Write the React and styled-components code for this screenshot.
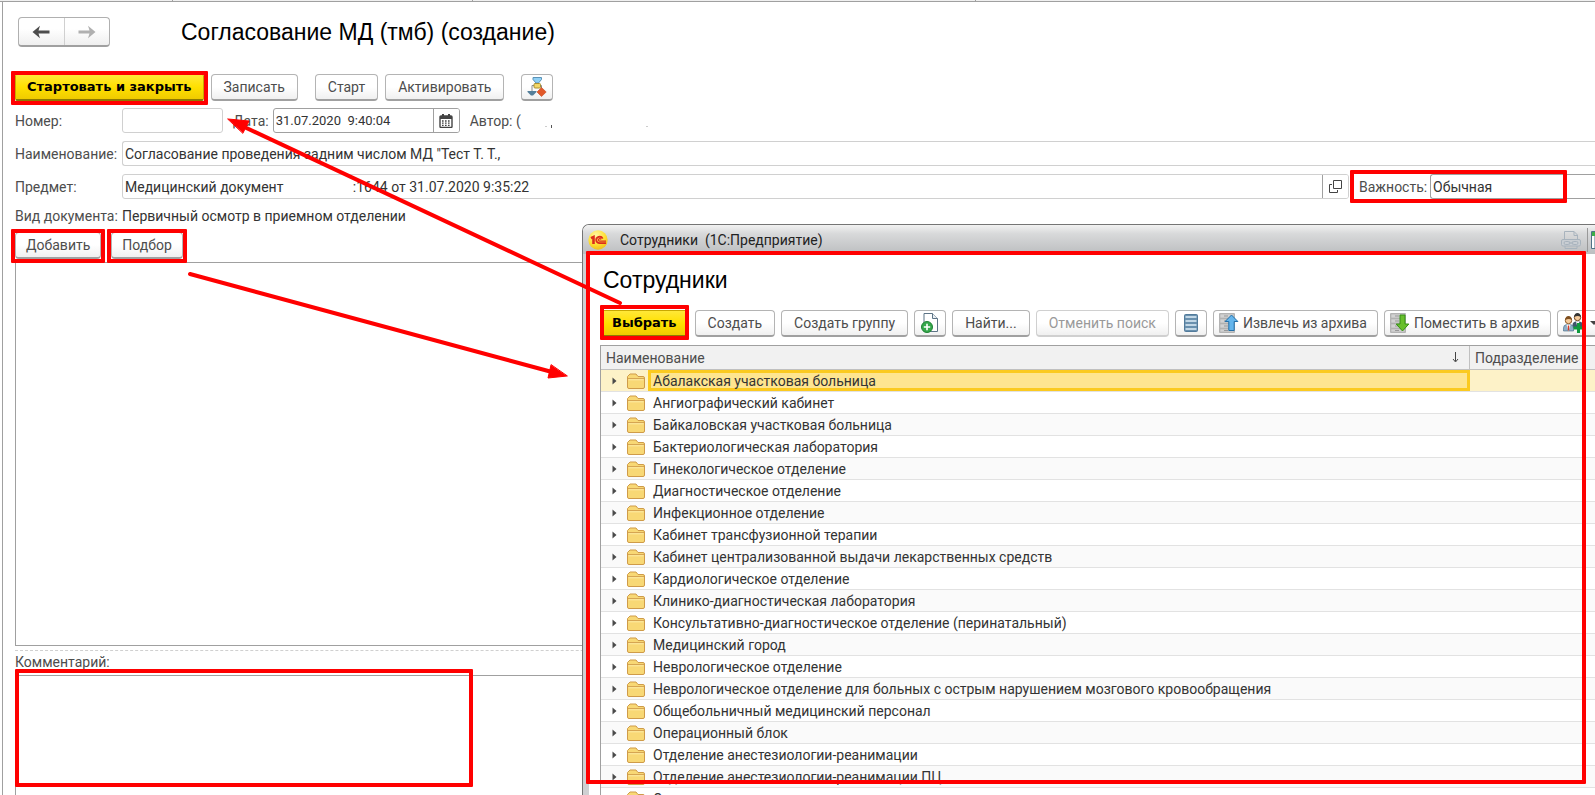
import React from "react";
import styled, { createGlobalStyle, css } from "styled-components";

const departments = [
  "Абалакская участковая больница",
  "Ангиографический кабинет",
  "Байкаловская участковая больница",
  "Бактериологическая лаборатория",
  "Гинекологическое отделение",
  "Диагностическое отделение",
  "Инфекционное отделение",
  "Кабинет трансфузионной терапии",
  "Кабинет централизованной выдачи лекарственных средств",
  "Кардиологическое отделение",
  "Клинико-диагностическая лаборатория",
  "Консультативно-диагностическое отделение (перинатальный)",
  "Медицинский город",
  "Неврологическое отделение",
  "Неврологическое отделение для больных с острым нарушением мозгового кровообращения",
  "Общебольничный медицинский персонал",
  "Операционный блок",
  "Отделение анестезиологии-реанимации",
  "Отделение анестезиологии-реанимации ПЦ",
  "О",
];

function BackIcon() {
  return (
    <svg width="18" height="14" viewBox="0 0 18 14">
      <path d="M0.5 7 8 0.8 6.5 5.4H17.5V8.6H6.5L8 13.2Z" fill="#4d4d4d" />
    </svg>
  );
}

function ForwardIcon() {
  return (
    <svg width="18" height="14" viewBox="0 0 18 14">
      <path d="M17.5 7 10 0.8 11.5 5.4H0.5V8.6H11.5L10 13.2Z" fill="#b0b0b0" />
    </svg>
  );
}

function RouteIcon() {
  return (
    <svg width="20" height="20" viewBox="0 0 20 20">
      <path d="M7 8.500H5V14M13.500 8.500h1V11" fill="none" stroke="#8b8b8b" />
      <path d="M6 0.500h8.500v2l-3 3.500h-2.500l-3-3.500z" fill="#8fd0f5" stroke="#5b93b8" />
      <rect x="7" y="6.500" width="6.500" height="4.500" rx="1" fill="#f3d767" stroke="#a88f35" />
      <path d="M0.500 14h9v1L6 18.500H4L0.500 15z" fill="#557f9a" />
      <path d="M14.500 10.500 19.200 15l-4.700 4.500L10 15z" fill="#e2592a" stroke="#c7481e" strokeWidth="0.600" />
    </svg>
  );
}

function CalendarIcon() {
  return (
    <svg width="14" height="14" viewBox="0 0 14 14">
      <rect x="1" y="2" width="12" height="11.500" rx="1" fill="#fff" stroke="#444" strokeWidth="1.400" />
      <path d="M1 2h12v3H1z" fill="#444" />
      <path d="M4 0v3M10 0v3" stroke="#444" strokeWidth="2" />
      <path d="M3 7h8M3 9.200h8M3 11.400h8" stroke="#444" strokeWidth="1.300" strokeDasharray="1.600 1.400" />
    </svg>
  );
}

function OpenIcon() {
  return (
    <svg width="13" height="13" viewBox="0 0 13 13" fill="none" stroke="#444">
      <path d="M4.500 0.500h8v8h-8z" />
      <path d="M3 4.500H0.500v8h8V10" />
    </svg>
  );
}

function LogoIcon() {
  return (
    <svg width="20" height="20" viewBox="0 0 20 20">
      <defs>
        <radialGradient id="logo" cx="0.4" cy="0.25" r="0.8">
          <stop offset="0" stopColor="#fff7a0" />
          <stop offset="0.6" stopColor="#ffdf33" />
          <stop offset="1" stopColor="#eebb1c" />
        </radialGradient>
      </defs>
      <circle cx="10" cy="10" r="9.700" fill="url(#logo)" />
      <g fill="none" stroke="#dc2c1c">
        <path d="M3 8.200 5.500 7V14" strokeWidth="2.600" />
        <path d="M14.700 8.600A3.400 3.200 0 1 0 11.600 13.200H18" strokeWidth="1.800" />
        <path d="M13 9.500A1.300 1.300 0 1 0 11.600 11.200H18" strokeWidth="1.300" />
      </g>
    </svg>
  );
}

function PrintIcon() {
  return (
    <svg width="20" height="18" viewBox="0 0 20 18" fill="none" stroke="#a8b3bd">
      <path d="M3.500 8.500v-8h9.500l3.500 3.500v4.500M13 0.500v4h3.500" />
      <rect x="0.500" y="8.500" width="19" height="6.500" rx="1.500" fill="#c9ced3" />
      <path d="M4 15v2.500h12V15" />
      <rect x="3" y="10.500" width="6" height="3" rx="1.500" />
      <rect x="11" y="10.500" width="6" height="3" rx="1.500" />
      <path d="M7.500 12h5" />
    </svg>
  );
}

function CopyIcon() {
  return (
    <svg width="18" height="20" viewBox="0 0 18 20">
      <path d="M3 0.500h8.500l5 5V18.500H3z" fill="#fff" stroke="#5d7486" />
      <path d="M11.500 0.500v5h5" fill="#e9eef2" stroke="#5d7486" />
      <circle cx="6" cy="14" r="5.500" fill="#35a84b" stroke="#1f8234" />
      <path d="M6 10.800v6.400M2.800 14h6.400" stroke="#fff" strokeWidth="1.600" />
    </svg>
  );
}

function ListIcon() {
  return (
    <svg width="14" height="18" viewBox="0 0 14 18">
      <rect x="0.500" y="0.500" width="13" height="17" rx="1" fill="#6990ae" stroke="#527b9b" />
      <path d="M1.500 3h11M1.500 7h11M1.500 11h11M1.500 15h11" stroke="#c2d7e6" strokeWidth="2" />
    </svg>
  );
}

function ArchiveIcon({ down }) {
  return (
    <svg width="20" height="20" viewBox="0 0 20 20">
      <rect width="16" height="20" rx="1" fill="#b5b5b5" />
      <path d="M1 1h14v4H1zM1 6h14v4H1zM1 11h14v4H1zM1 16h14v3H1z" fill="#d2d2d2" stroke="#b0b0b0" strokeWidth="0.600" />
      <path d="M5 3h4M5 8h4M5 13h4M5 17.500h4" stroke="#999" />
      {down ? (
        <path d="M10 2h5v9h3.800L12.500 18 6.200 11H10z" fill="#69bf2d" stroke="#379016" />
      ) : (
        <path d="M12.500 2 18.900 8.500H15.200V17.500H9.800V8.500H6.100z" fill="#64b5ec" stroke="#236fa8" />
      )}
    </svg>
  );
}

function PeopleIcon() {
  return (
    <svg width="21" height="20" viewBox="0 0 21 20">
      <path d="M9.500 15V12q0-3 3-3.500h4q3.500 0.500 3.500 4V15z" fill="#3f566c" />
      <path d="M13 8.500 14.500 14 16.500 8.500z" fill="#fff" />
      <circle cx="14.500" cy="4.500" r="3.200" fill="#f4ca9b" stroke="#6f4522" />
      <path d="M11 4q0.500-4 3.500-4t3.500 4q-3-2-7 0z" fill="#333" />
      <path d="M0.500 18v-3q0-3 3-3.500h4q3 0.500 3 3.500v3z" fill="#8fb0c9" stroke="#42657e" strokeWidth="0.600" />
      <path d="M3.500 11.500 5.500 18 7.500 11.500z" fill="#fff" />
      <path d="M5.500 12.500v5" stroke="#d43a26" strokeWidth="1.400" />
      <circle cx="5.500" cy="7.500" r="3.200" fill="#f6cd9c" stroke="#8a5523" />
      <path d="M2 7q0.500-4 3.500-4t3.500 4q-3-2-7 0z" fill="#80501f" />
      <path d="M15.500 10v10M10.500 15h10" stroke="#109a3e" strokeWidth="3" />
    </svg>
  );
}

function FolderIcon() {
  return (
    <svg width="18" height="16" viewBox="0 0 18 16">
      <path d="M0.500 14V3.500L3 1h6l2 2.500h5q1.500 0 1.500 1.500v9q0 1.500-1.500 1.500H2Q0.500 15.500 0.500 14z" fill="#f8d875" stroke="#cf9b49" />
      <path d="M1 5.500h16" stroke="#d6a552" />
      <path d="M1.500 6.800h15" stroke="#fdeba4" />
    </svg>
  );
}

function Expander() {
  return (
    <svg width="5" height="8" viewBox="0 0 5 8">
      <path d="M0.500 0.500 4.500 4 0.500 7.500z" fill="#4a4a4a" />
    </svg>
  );
}

function Arrows() {
  return (
    <ArrowLayer width="640" height="400" viewBox="0 0 640 400">
      <g stroke="#ff0000" strokeWidth="4" fill="#ff0000" strokeLinecap="round">
        <path d="M620 303 240 125" />
        <path d="M190 274 552 372" />
        <path d="M228 119 249 121 243 133z" strokeWidth="1" />
        <path d="M567 376 548 378 551 365z" strokeWidth="1" />
      </g>
    </ArrowLayer>
  );
}

function App() {
  return (
    <Page>
      <GlobalStyle />
      <TabStrip>
        <Tab />
        <Tab $wide />
        <Tab $wide />
      </TabStrip>
      <Form>
        <Header>
          <NavGroup>
            <NavButton aria-label="Назад">
              <BackIcon />
            </NavButton>
            <NavButton aria-label="Вперед">
              <ForwardIcon />
            </NavButton>
          </NavGroup>
          <Title>Согласование МД (тмб) (создание)</Title>
        </Header>

        <Toolbar>
          <Marked>
            <Button $primary>Стартовать и закрыть</Button>
          </Marked>
          <Button>Записать</Button>
          <Divider />
          <Button>Старт</Button>
          <Button>Активировать</Button>
          <Divider />
          <Button $icon aria-label="Карта маршрута">
            <RouteIcon />
          </Button>
        </Toolbar>

        <Field>
          <Label htmlFor="number">Номер:</Label>
          <Box $width={101}>
            <Input id="number" />
          </Box>
          <InlineLabel htmlFor="date">Дата:</InlineLabel>
          <Box $width={187} $dark>
            <Input id="date" $small defaultValue="31.07.2020  9:40:04" />
            <BoxButton aria-label="Календарь">
              <CalendarIcon />
            </BoxButton>
          </Box>
          <Author>
            <span>Автор: (</span>
            <svg width="130" height="14" viewBox="0 0 130 14">
              <path d="M20 12.500h2M121 12.500h2" stroke="#ccc" />
              <path d="M26.500 11v3" stroke="#555" />
            </svg>
          </Author>
        </Field>

        <Field>
          <Label htmlFor="name">Наименование:</Label>
          <Box $open>
            <Input
              id="name"
              defaultValue={'Согласование проведения задним числом МД "Тест Т. Т.,'}
            />
          </Box>
        </Field>

        <Field>
          <Label htmlFor="subject">Предмет:</Label>
          <Box>
            <Input
              id="subject"
              defaultValue={"Медицинский документ" + " ".repeat(20) + ":1644 от 31.07.2020 9:35:22"}
            />
            <BoxButton aria-label="Открыть">
              <OpenIcon />
            </BoxButton>
          </Box>
          <Importance>
            <label htmlFor="importance">Важность:</label>
            <Box $open $dark>
              <Input id="importance" defaultValue="Обычная" />
            </Box>
          </Importance>
        </Field>

        <Kind>
          <Label as="span">Вид документа:</Label>
          <span>Первичный осмотр в приемном отделении</span>
        </Kind>

        <ListToolbar>
          <Marked>
            <Button>Добавить</Button>
          </Marked>
          <Marked>
            <Button>Подбор</Button>
          </Marked>
        </ListToolbar>

        <List />
        <Splitter />
        <CommentLabel htmlFor="comment">Комментарий:</CommentLabel>
        <CommentArea>
          <Comment id="comment" />
        </CommentArea>
      </Form>

      <Window>
        <TitleBar>
          <LogoIcon />
          <span>Сотрудники&nbsp; (1С:Предприятие)</span>
          <TitleTools>
            <PrintIcon />
            <CalcEdge>
              <svg width="4" height="18" viewBox="0 0 4 18">
                <path d="M0.500 0.500H4V17.500H0.500z" fill="#fff" stroke="#4f7186" />
                <path d="M1 1h3v4H1z" fill="#3fae49" />
              </svg>
            </CalcEdge>
          </TitleTools>
        </TitleBar>
        <WindowBody>
          <WindowTitle>Сотрудники</WindowTitle>
          <WindowToolbar>
            <Marked>
              <Button $primary>Выбрать</Button>
            </Marked>
            <Button>Создать</Button>
            <Button>Создать группу</Button>
            <Button $icon aria-label="Скопировать">
              <CopyIcon />
            </Button>
            <Button>Найти...</Button>
            <Button disabled>Отменить поиск</Button>
            <Button $icon aria-label="Режим просмотра">
              <ListIcon />
            </Button>
            <Button $picture>
              <ArchiveIcon />
              Извлечь из архива
            </Button>
            <Button $picture>
              <ArchiveIcon down />
              Поместить в архив
            </Button>
            <Button $picture aria-label="Добавить сотрудников">
              <PeopleIcon />
              <Caret />
            </Button>
          </WindowToolbar>
          <Table>
            <thead>
              <tr>
                <Th $main>
                  <HeadCell>
                    Наименование
                    <svg width="7" height="11" viewBox="0 0 7 11">
                      <path d="M3.500 0v9M1 7l2.500 3L6 7" fill="none" stroke="#444" />
                    </svg>
                  </HeadCell>
                </Th>
                <Th>Подразделение</Th>
              </tr>
            </thead>
            <tbody>
              {departments.map((name, i) => (
                <Row key={name} $selected={i === 0}>
                  <td>
                    <NameCell>
                      <Expander />
                      <FolderIcon />
                      <Name $selected={i === 0}>{name}</Name>
                    </NameCell>
                  </td>
                  <td />
                </Row>
              ))}
            </tbody>
          </Table>
        </WindowBody>
        <WindowFrame />
      </Window>
      <Arrows />
    </Page>
  );
}

const GlobalStyle = createGlobalStyle`
  *, *::after {
    box-sizing: border-box;
  }
  body {
    margin: 0;
    background: #fff;
    color: #333;
    font: 14px/20px Roboto, "Liberation Sans", sans-serif;
  }
  button, input, textarea {
    font: inherit;
    color: inherit;
  }
  svg {
    display: block;
    flex: none;
  }
`;

const Page = styled.div`
  position: relative;
  display: flex;
  flex-direction: column;
  height: 100vh;
  overflow: hidden;
`;

const TabStrip = styled.div`
  display: flex;
  flex: none;
  height: 2px;
  padding-left: 172px;
  background: #f0f0f0;
  border-bottom: 1px solid #a0a0a0;
`;

const Tab = styled.div`
  width: ${(p) => (p.$wide ? 503 : 300)}px;
  border-left: 1px solid #a0a0a0;
`;

const Form = styled.main`
  display: flex;
  flex: 1;
  flex-direction: column;
  min-height: 0;
  margin-left: 2px;
  padding: 15px 0 0 12px;
  border-left: 1px solid #a0a0a0;
`;

const Header = styled.header`
  display: flex;
  align-items: center;
  gap: 71px;
  margin: 0 0 27px 3px;
`;

const NavGroup = styled.div`
  display: flex;
  width: 92px;
  height: 30px;
  border: 1px solid #b0b0b0;
  border-bottom: 2px solid #a0a0a0;
  border-radius: 4px;
  background: linear-gradient(#fff 40%, #efefef);
`;

const NavButton = styled.button`
  display: flex;
  flex: 1;
  align-items: center;
  justify-content: center;
  padding: 0;
  border: 0;
  background: none;
  & + & {
    border-left: 1px solid #d0d0d0;
  }
`;

const Title = styled.h1`
  margin: 0;
  color: #000;
  font: 23px/30px "Liberation Sans", sans-serif;
`;

const Divider = styled.div`
  width: 3px;
`;

const Button = styled.button`
  display: flex;
  align-items: center;
  justify-content: center;
  height: 27px;
  padding: 0 12px;
  border: 1px solid #b4b4b4;
  border-bottom: 2px solid #a0a0a0;
  border-radius: 4px;
  background: linear-gradient(#fff 50%, #f0f0f0);
  color: #4d4d4d;
  white-space: nowrap;
  ${(p) =>
    p.$primary &&
    css`
      padding: 0 11px;
      border-color: #c9a800 #c9a800 #8f7900;
      border-radius: 2px;
      background: linear-gradient(#ffe838, #ffe000 50%, #efcb00);
      color: #000;
      font: 700 13px/20px "DejaVu Sans", sans-serif;
    `}
  ${(p) =>
    p.$icon &&
    css`
      width: 32px;
      padding: 0;
    `}
  ${(p) =>
    p.$picture &&
    css`
      gap: 4px;
      padding: 0 10px 0 5px;
    `}
  &:disabled {
    border-color: #d0d0d0;
    color: #999;
  }
`;

// red highlight around a control
const mark = css`
  position: relative;
  &::after {
    content: "";
    position: absolute;
    inset: -3px -4px -4px;
    border: 4px solid #ff0000;
    border-radius: 1px;
    pointer-events: none;
  }
`;

const Marked = styled.div`
  ${mark}
`;

const Toolbar = styled.div`
  display: flex;
  gap: 7px;
  margin-bottom: 7px;
`;

const ListToolbar = styled.div`
  display: flex;
  gap: 10px;
  margin-bottom: 3px;
  ${Button} {
    padding: 0 10px;
  }
`;

const Field = styled.div`
  display: flex;
  align-items: center;
  height: 25px;
  margin-bottom: 8px;
`;

const Label = styled.label`
  flex: none;
  width: 107px;
  color: #4d4d4d;
  white-space: nowrap;
`;

const InlineLabel = styled.label`
  margin: 0 4px 0 10px;
  color: #4d4d4d;
`;

const Box = styled.div`
  display: flex;
  flex: ${(p) => (p.$width ? "none" : "1")};
  width: ${(p) => (p.$width ? p.$width + "px" : "auto")};
  height: 25px;
  min-width: 0;
  overflow: hidden;
  border: 1px solid ${(p) => (p.$dark ? "#a0a0a0" : "#d0d0d0")};
  border-right-width: ${(p) => (p.$open ? 0 : 1)}px;
  border-radius: ${(p) => (p.$open ? "3px 0 0 3px" : "3px")};
`;

const Input = styled.input`
  flex: 1;
  min-width: 0;
  padding: 0 2px;
  border: 0;
  outline: 0;
  background: transparent;
  font-size: ${(p) => (p.$small ? 13 : 14)}px;
`;

const BoxButton = styled.button`
  display: flex;
  align-items: center;
  justify-content: center;
  width: 26px;
  padding: 0;
  border: 0;
  border-left: 1px solid #a0a0a0;
  background: #fff;
`;

const Author = styled.div`
  display: flex;
  align-items: center;
  gap: 4px;
  margin-left: 10px;
  color: #4d4d4d;
`;

const Importance = styled.div`
  ${mark}
  display: flex;
  align-items: center;
  justify-content: space-between;
  width: 244px;
  margin-left: 2px;
  padding-left: 8px;
  color: #4d4d4d;
  ${Box} {
    flex: none;
    width: 165px;
    color: #333;
  }
  &::after {
    inset: -4px 28px -4px -1px;
  }
`;

const Kind = styled.div`
  display: flex;
  margin: -1px 0 6px;
`;

const List = styled.div`
  flex: none;
  height: 384px;
  border: 1px solid #a0a0a0;
  border-right: 0;
`;

const Splitter = styled.div`
  margin: 4px 0 1px;
  border-top: 1px dashed #d0d0d0;
`;

const CommentLabel = styled.label`
  padding-bottom: 3px;
  color: #4d4d4d;
`;

const CommentArea = styled.div`
  ${mark}
  display: flex;
  flex: 1;
  min-height: 0;
  &::after {
    inset: -6px auto auto 0;
    width: 458px;
    height: 118px;
  }
`;

const Comment = styled.textarea`
  flex: 1;
  border: 1px solid #a0a0a0;
  border-width: 1px 0 0 1px;
  outline: 0;
  resize: none;
`;

const Window = styled.section`
  position: absolute;
  inset: 224px 0 0 582px;
  display: flex;
  flex-direction: column;
  overflow: hidden;
  border: 1px solid #757575;
  border-width: 1px 0 0 1px;
  border-radius: 7px 0 0 0;
  background: #fff;
`;

const TitleBar = styled.div`
  display: flex;
  flex: none;
  align-items: center;
  gap: 12px;
  height: 29px;
  padding-left: 5px;
  background: linear-gradient(#f2f2f2, #d8d9da 30%, #bcbec0);
  color: #222;
`;

const TitleTools = styled.div`
  display: flex;
  align-self: stretch;
  align-items: center;
  gap: 6px;
  margin-left: auto;
`;

const CalcEdge = styled.div`
  display: flex;
  align-items: center;
  justify-content: flex-end;
  width: 8px;
  height: 24px;
  border-left: 1px solid #999;
`;

const WindowBody = styled.div`
  flex: 1;
  min-height: 0;
  overflow: hidden;
  padding: 11px 0 0 11px;
  border-left: 6px solid #cfd0d2;
`;

const WindowTitle = styled.h2`
  margin: 0 0 15px 3px;
  color: #000;
  font: 23px/30px "Liberation Sans", sans-serif;
`;

const WindowToolbar = styled.div`
  display: flex;
  gap: 6px;
  margin-bottom: 8px;
  ${Button} {
    flex: none;
  }
  ${Marked}::after {
    inset: -5px 0 -3px;
  }
`;

const Caret = styled.span`
  margin-left: 2px;
  border: 4px solid transparent;
  border-top-color: #444;
  border-bottom: 0;
`;

const Table = styled.table`
  width: 100%;
  table-layout: fixed;
  border-collapse: separate;
  border-spacing: 0;
  border: 1px solid #a0a0a0;
  border-width: 1px 0 0 1px;
  td {
    height: 22px;
    padding: 0;
    border-bottom: 1px solid #e2e2e2;
  }
`;

const Th = styled.th`
  width: ${(p) => (p.$main ? "auto" : "125px")};
  height: 24px;
  padding: 0 5px;
  border-right: ${(p) => (p.$main ? "1px solid #c0c0c0" : "0")};
  border-bottom: 1px solid #c0c0c0;
  background: #f1f1f1;
  color: #4d4d4d;
  font-weight: 400;
  text-align: left;
`;

const HeadCell = styled.div`
  display: flex;
  align-items: center;
  justify-content: space-between;
  padding-right: 5px;
`;

const Row = styled.tr`
  background: ${(p) => (p.$selected ? "#fdf2c8" : "#fff")};
  &:nth-child(odd):not(:first-child) {
    background: #fafafa;
  }
`;

const NameCell = styled.div`
  display: flex;
  align-items: center;
  height: 21px;
  padding-left: 11px;
  gap: 10px;
`;

const Name = styled.span`
  flex: 1;
  height: 21px;
  margin-left: -7px;
  padding-left: 2px;
  border: 3px solid ${(p) => (p.$selected ? "#fbca20" : "transparent")};
  background: ${(p) => (p.$selected ? "#fee590" : "transparent")};
  line-height: 16px;
  white-space: nowrap;
`;

const WindowFrame = styled.div`
  position: absolute;
  inset: 26px 9px 11px 3px;
  border: 4px solid #ff0000;
  border-radius: 1px;
  pointer-events: none;
`;

const ArrowLayer = styled.svg`
  position: absolute;
  top: 0;
  left: 0;
  pointer-events: none;
`;

export default App;
